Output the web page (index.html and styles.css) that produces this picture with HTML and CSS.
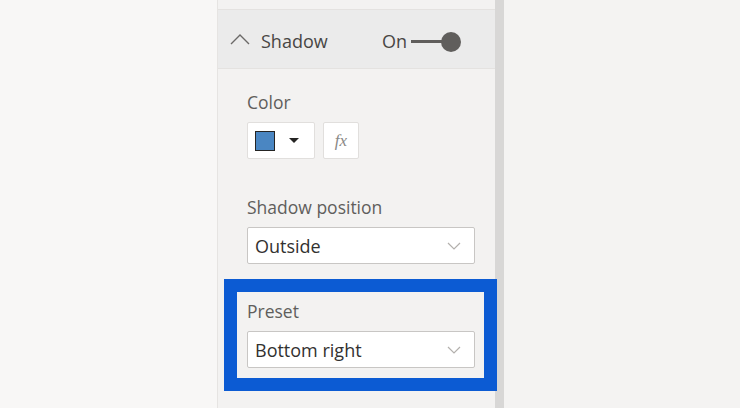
FILE: index.html
```html
<!DOCTYPE html>
<html lang="en">
<head>
  <title>Format visual - Shadow</title>
  <link rel="stylesheet" href="styles.css">
</head>
<body>

  <div class="side-gap"></div>

  <div class="pane">
    <div class="pane-top"></div>

    <div class="card-header">
      <svg class="chev-up" width="20" height="11" viewBox="0 0 20 11">
        <polyline points="1,10 10,1 19,10" fill="none" stroke="#6b6967" stroke-width="1.4"/>
      </svg>
      <span class="card-title">Shadow</span>
      <span class="toggle-label">On</span>
      <span class="toggle">
        <span class="toggle-track"></span>
        <span class="toggle-knob"></span>
      </span>
    </div>

    <div class="card-body">
      <div class="field color-field">
        <div class="field-label">Color</div>
        <div class="color-row">
          <button class="color-btn">
            <span class="swatch"></span>
            <svg width="10" height="6" viewBox="0 0 10 6"><polygon points="0,0 10,0 5,5" fill="#252423"/></svg>
          </button>
          <button class="fx-btn">fx</button>
        </div>
      </div>

      <div class="field">
        <div class="field-label">Shadow position</div>
        <div class="select">
          <span>Outside</span>
          <svg width="14" height="8" viewBox="0 0 14 8"><polyline points="1,1 7,7 13,1" fill="none" stroke="#b3b0ad" stroke-width="1.2"/></svg>
        </div>
      </div>

      <!-- highlighted setting -->
      <div class="field preset">
        <div class="field-label">Preset</div>
        <div class="select">
          <span>Bottom right</span>
          <svg width="14" height="8" viewBox="0 0 14 8"><polyline points="1,1 7,7 13,1" fill="none" stroke="#b3b0ad" stroke-width="1.2"/></svg>
        </div>
      </div>
    </div>
  </div>

  <div class="scrollbar"></div>
  <div class="canvas"></div>

</body>
</html>
```

FILE: styles.css
```css
* {
  box-sizing: border-box;
}

body {
  margin: 0;
  display: flex;
  height: 408px;
  overflow: hidden;
  background-color: #f4f3f2;
  font-family: "Open Sans", "Noto Sans", sans-serif;
  color: #323130;
}

.side-gap {
  width: 217px;
  background-color: #f8f7f6;
}

.pane {
  width: 278px;
  background-color: #f3f2f1;
  border-left: 1px solid #e6e4e2;
  position: relative;
  z-index: 1;
}

.pane-top {
  height: 10px;
  border-bottom: 1px solid #e4e2e0;
}

.card-header {
  height: 59px;
  display: flex;
  align-items: center;
  padding: 4px 0 0 12px;
  background-color: #ebebeb;
  border-bottom: 1px solid #e4e2e0;
}

.chev-up {
  margin-top: -3px;
}

.card-title {
  margin-left: 11px;
  font-size: 18px;
  color: #484644;
  width: 121px;
}

.toggle-label {
  font-size: 18px;
  color: #484644;
}

.toggle {
  display: flex;
  align-items: center;
  margin-left: 4px;
  margin-top: 1px;
}

.toggle-track {
  width: 32px;
  height: 3px;
  background-color: #605e5c;
}

.toggle-knob {
  width: 20px;
  height: 20px;
  border-radius: 50%;
  background-color: #605e5c;
  margin-left: -2px;
}

.card-body {
  padding: 22px 0 0 29px;
}

.field {
  margin-bottom: 28px;
}

.color-field {
  margin-bottom: 37px;
}

.field-label {
  font-size: 17.5px;
  color: #605e5c;
  height: 22px;
  line-height: 22px;
  margin-bottom: 9px;
}

.color-row {
  display: flex;
  gap: 8px;
}

button {
  font-family: inherit;
  background-color: #ffffff;
  border: 1px solid #e1dfdd;
  border-radius: 2px;
  height: 37px;
  padding: 0;
  cursor: pointer;
}

.color-btn {
  width: 68px;
  display: flex;
  align-items: center;
  padding-left: 7px;
  gap: 14px;
}

.swatch {
  width: 20px;
  height: 20px;
  background-color: #4a86c2;
  border: 1px solid #252423;
}

.fx-btn {
  width: 36px;
  font-family: "Liberation Serif", serif;
  font-style: italic;
  font-size: 17px;
  color: #8a8886;
}

.select {
  width: 228px;
  height: 37px;
  display: flex;
  align-items: center;
  justify-content: space-between;
  padding: 0 13px 0 7px;
  background-color: #ffffff;
  border: 1px solid #c8c6c4;
  border-radius: 2px;
  font-size: 18px;
  color: #323130;
}

.preset {
  margin-left: -10px;
  padding: 8px 0 10px 10px;
  width: 247px;
  outline: 13px solid #0c5bd3;
}

.scrollbar {
  width: 9px;
  background-color: #d8d7d6;
}

.canvas {
  flex: 1;
  background-color: #f4f3f2;
}
```
